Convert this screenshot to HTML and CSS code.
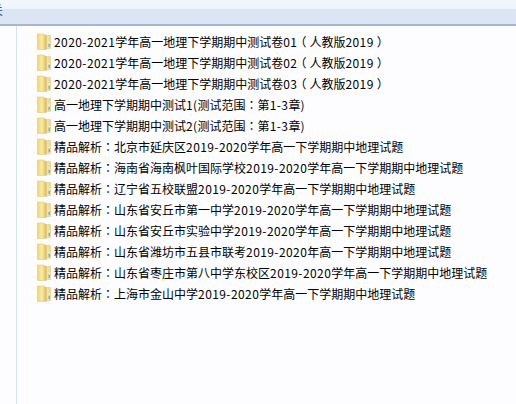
FILE: index.html
```html
<!DOCTYPE html>
<html lang="zh-CN">
<head>
<meta charset="utf-8">
<title>文件夹</title>
<link rel="stylesheet" href="styles.css">
</head>
<body>
<svg class="defs" width="0" height="0" aria-hidden="true">
  <defs>
    <linearGradient id="fb" x1="0" x2="1" y1="0" y2="0"><stop offset="0" stop-color="#d9b352"/><stop offset="0.3" stop-color="#f5e7a4"/><stop offset="1" stop-color="#ecd588"/></linearGradient>
    <linearGradient id="ff" x1="0" x2="1" y1="0" y2="0"><stop offset="0" stop-color="#efd578"/><stop offset="0.5" stop-color="#f9eaa6"/><stop offset="1" stop-color="#dcb756"/></linearGradient>
    <symbol id="folder" viewBox="0 0 14 17">
      <path d="M8 2.5 H13.5 V15.5 H8 Z" fill="url(#fb)" stroke="#e0cb8a" stroke-width="0.6"/>
      <path d="M0.5 1 H6 L9.5 2.5 V16.5 H0.5 Z" fill="url(#ff)" stroke="#e2c87e" stroke-width="0.6"/>
      <rect x="11.6" y="10.5" width="1.2" height="3.5" fill="#4fb0e8"/>
      <rect x="11.6" y="8.5" width="1.2" height="2" fill="#f4f4e8"/>
    </symbol>
  </defs>
</svg>
<header class="toolbar"><span class="toolbar-label">关</span></header>
<main class="content">
  <ul class="files">
    <li class="file"><svg class="icon"><use href="#folder"/></svg><span><span class="num">2020-2021</span>学年高一地理下学期期中测试卷<span class="num">01</span><span class="paren">（</span>人教版<span class="num">2019</span><span class="paren">）</span></span></li>
    <li class="file"><svg class="icon"><use href="#folder"/></svg><span><span class="num">2020-2021</span>学年高一地理下学期期中测试卷<span class="num">02</span><span class="paren">（</span>人教版<span class="num">2019</span><span class="paren">）</span></span></li>
    <li class="file"><svg class="icon"><use href="#folder"/></svg><span><span class="num">2020-2021</span>学年高一地理下学期期中测试卷<span class="num">03</span><span class="paren">（</span>人教版<span class="num">2019</span><span class="paren">）</span></span></li>
    <li class="file"><svg class="icon"><use href="#folder"/></svg><span>高一地理下学期期中测试<span class="num">1(</span>测试范围<span class="punct" lang="zh-TW">：</span>第<span class="num">1-3</span>章<span class="num">)</span></span></li>
    <li class="file"><svg class="icon"><use href="#folder"/></svg><span>高一地理下学期期中测试<span class="num">2(</span>测试范围<span class="punct" lang="zh-TW">：</span>第<span class="num">1-3</span>章<span class="num">)</span></span></li>
    <li class="file"><svg class="icon"><use href="#folder"/></svg><span>精品解析<span class="punct" lang="zh-TW">：</span>北京市延庆区<span class="num">2019-2020</span>学年高一下学期期中地理试题</span></li>
    <li class="file"><svg class="icon"><use href="#folder"/></svg><span>精品解析<span class="punct" lang="zh-TW">：</span>海南省海南枫叶国际学校<span class="num">2019-2020</span>学年高一下学期期中地理试题</span></li>
    <li class="file"><svg class="icon"><use href="#folder"/></svg><span>精品解析<span class="punct" lang="zh-TW">：</span>辽宁省五校联盟<span class="num">2019-2020</span>学年高一下学期期中地理试题</span></li>
    <li class="file"><svg class="icon"><use href="#folder"/></svg><span>精品解析<span class="punct" lang="zh-TW">：</span>山东省安丘市第一中学<span class="num">2019-2020</span>学年高一下学期期中地理试题</span></li>
    <li class="file"><svg class="icon"><use href="#folder"/></svg><span>精品解析<span class="punct" lang="zh-TW">：</span>山东省安丘市实验中学<span class="num">2019-2020</span>学年高一下学期期中地理试题</span></li>
    <li class="file"><svg class="icon"><use href="#folder"/></svg><span>精品解析<span class="punct" lang="zh-TW">：</span>山东省潍坊市五县市联考<span class="num">2019-2020</span>年高一下学期期中地理试题</span></li>
    <li class="file"><svg class="icon"><use href="#folder"/></svg><span>精品解析<span class="punct" lang="zh-TW">：</span>山东省枣庄市第八中学东校区<span class="num">2019-2020</span>学年高一下学期期中地理试题</span></li>
    <li class="file"><svg class="icon"><use href="#folder"/></svg><span>精品解析<span class="punct" lang="zh-TW">：</span>上海市金山中学<span class="num">2019-2020</span>学年高一下学期期中地理试题</span></li>
  </ul>
</main>
</body>
</html>
```

FILE: styles.css
```css
* { box-sizing: border-box; }
html, body { margin: 0; height: 100%; }
body {
  width: 516px;
  height: 404px;
  overflow: hidden;
  background: #fdfdff;
  font-family: "Noto Sans CJK SC", "Liberation Sans", sans-serif;
  font-size: 12px;
  color: #000;
  display: flex;
  flex-direction: column;
}
.defs { position: absolute; }
.toolbar {
  height: 26px;
  flex: none;
  background: linear-gradient(#f2f7fd 0, #eef4fc 9px, #dbe5f3 9px, #dbe5f3 23px);
  border-bottom: 2px solid #a9b5cc;
  overflow: hidden;
}
.toolbar-label {
  display: block;
  margin-left: -9px;
  line-height: 20px;
  color: #2a5a96;
}
.content {
  flex: 1;
  margin-left: 16px;
  border-left: 1px solid #d3e3f6;
  padding: 5px 0 0 20px;
}
.files { list-style: none; margin: 0; padding: 0; }
.file {
  height: 21px;
  display: flex;
  align-items: center;
  gap: 3px;
  white-space: nowrap;
}
.icon { width: 14px; height: 17px; flex: none; }
.num { letter-spacing: 0.42px; }
.punct { font-family: "Noto Sans CJK TC", sans-serif; }
.paren {
  display: inline-block;
  padding: 0 3px;
  font-feature-settings: "halt";
}
```
